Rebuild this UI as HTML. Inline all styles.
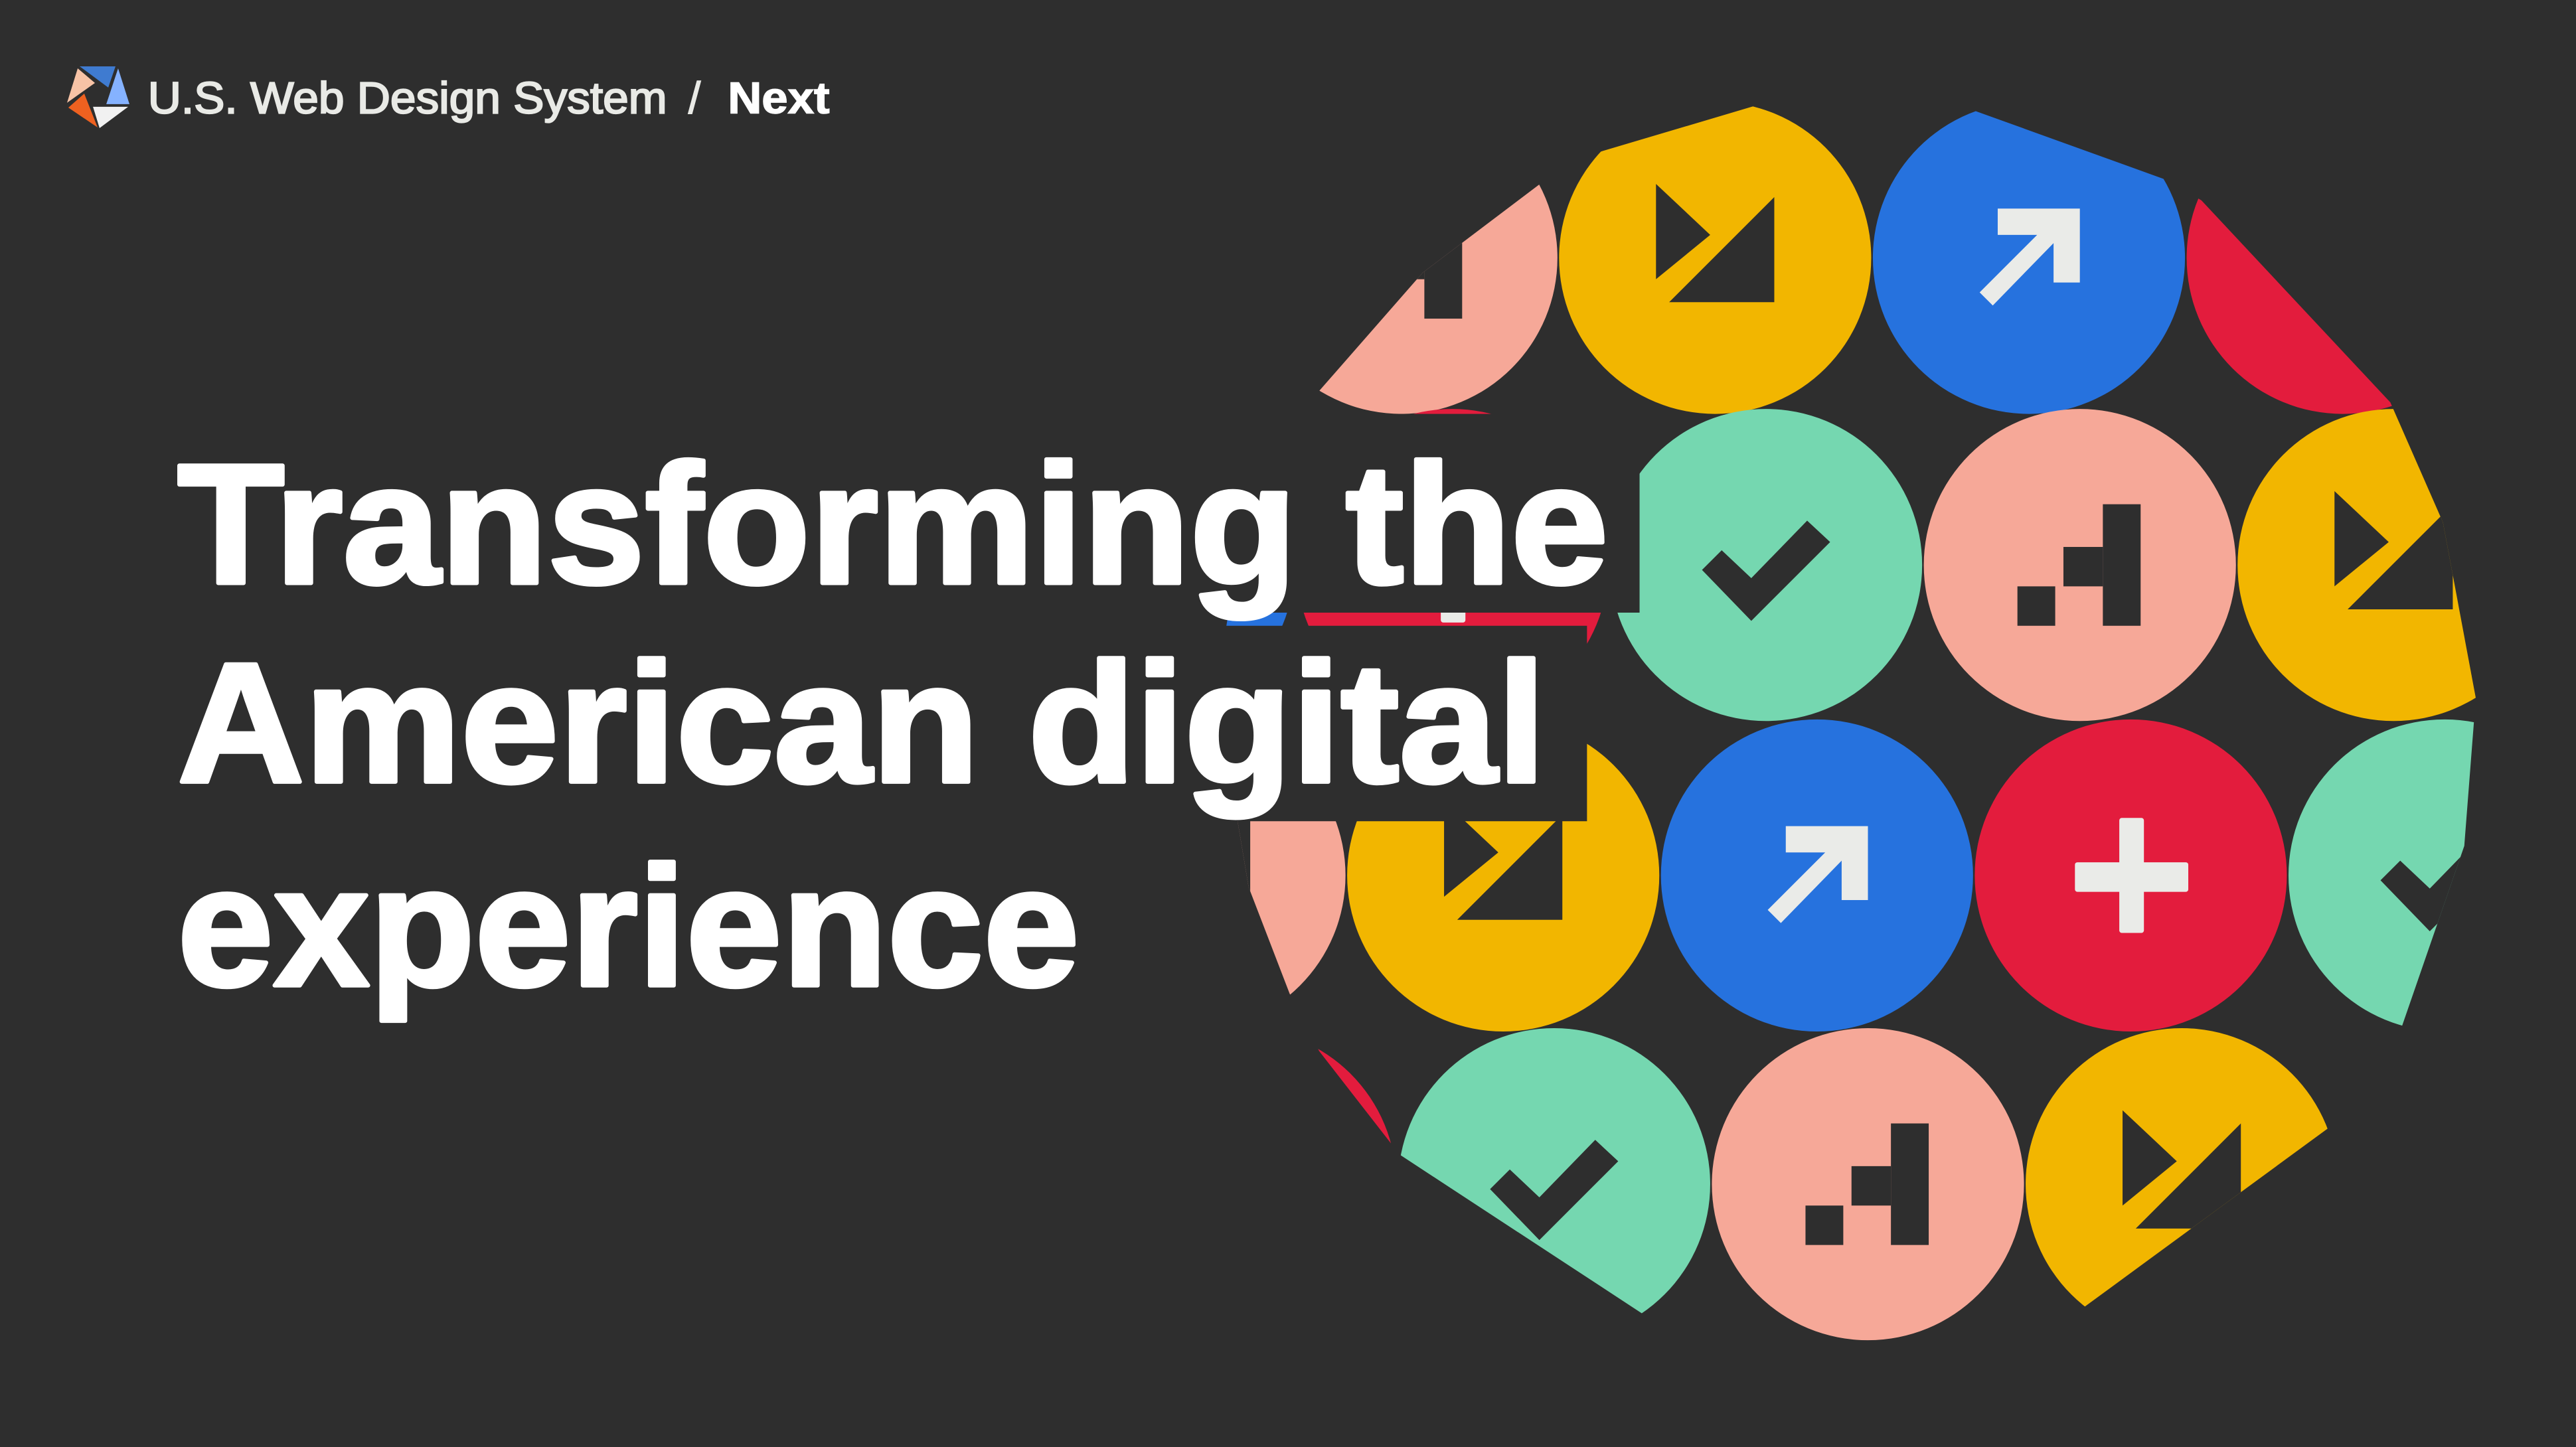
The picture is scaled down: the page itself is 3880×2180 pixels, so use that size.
<!DOCTYPE html>
<html><head><meta charset="utf-8"><style>
html,body{margin:0;padding:0;background:#2e2e2e;width:3880px;height:2180px;overflow:hidden}
svg{display:block}
</style></head><body>
<svg width="3880" height="2180" viewBox="0 0 1568 881" preserveAspectRatio="none" xmlns="http://www.w3.org/2000/svg">
<defs>
<clipPath id="big"><polygon points="803,238 866,166 940,110 972,93 1073,63 1198,66 1320,110 1340,122 1455,245 1487,318 1507,425 1500,515 1462,625 1417,687 1267,797 1137,840 1000,800 852,703 803,640 785,605 760,540 740,420 760,300"/></clipPath>
<g id="flag"><polygon points="-36,-45 -36,13 -3,-14" fill="#2e2e2e"/><polygon points="36,-37 36,27 -28,27" fill="#2e2e2e"/></g>
<g id="arrow"><polygon points="-19,-30 31,-30 31,15 15,15 15,-9 -22,29 -30,21 5,-14 -19,-14" fill="#eaebe8"/></g>
<g id="check"><polygon points="-39,3 -27,-9 -9,8 25,-27 39,-14 -9,34" fill="#2e2e2e"/></g>
<g id="steps" fill="#2e2e2e"><rect x="-38" y="13" width="23" height="24"/><rect x="-10" y="-11" width="24" height="24"/><rect x="14" y="-37" width="23" height="74"/></g>
<g id="plus" fill="#eaebe8"><rect x="-7" y="-35" width="15" height="70" rx="1.5"/><rect x="-34" y="-8" width="69" height="18" rx="1.5"/></g>
</defs>
<rect width="1568" height="881" fill="#2e2e2e"/>
<g clip-path="url(#big)">
 <circle cx="853" cy="157" r="95" fill="#f6a898"/><use href="#steps" x="853" y="157"/>
 <circle cx="1044" cy="157" r="95" fill="#f2b600"/><use href="#flag" x="1044" y="157"/>
 <circle cx="1235" cy="157" r="95" fill="#2672de"/><use href="#arrow" x="1235" y="157"/>
 <circle cx="1426" cy="157" r="95" fill="#e31c3d"/><use href="#plus" x="1426" y="157"/>
 <circle cx="693" cy="344" r="95" fill="#2672de"/><use href="#arrow" x="693" y="344"/>
 <circle cx="884" cy="344" r="95" fill="#e31c3d"/><use href="#plus" x="884" y="344"/>
 <circle cx="1075" cy="344" r="95" fill="#75d7b0"/><use href="#check" x="1075" y="344"/>
 <circle cx="1266" cy="344" r="95" fill="#f6a898"/><use href="#steps" x="1266" y="344"/>
 <circle cx="1457" cy="344" r="95" fill="#f2b600"/><use href="#flag" x="1457" y="344"/>
 <circle cx="724" cy="533" r="95" fill="#f6a898"/><use href="#steps" x="724" y="533"/>
 <circle cx="915" cy="533" r="95" fill="#f2b600"/><use href="#flag" x="915" y="533"/>
 <circle cx="1106" cy="533" r="95" fill="#2672de"/><use href="#arrow" x="1106" y="533"/>
 <circle cx="1297" cy="533" r="95" fill="#e31c3d"/><use href="#plus" x="1297" y="533"/>
 <circle cx="1488" cy="533" r="95" fill="#75d7b0"/><use href="#check" x="1488" y="533"/>
 <circle cx="755" cy="721" r="95" fill="#e31c3d"/><use href="#plus" x="755" y="721"/>
 <circle cx="946" cy="721" r="95" fill="#75d7b0"/><use href="#check" x="946" y="721"/>
 <circle cx="1137" cy="721" r="95" fill="#f6a898"/><use href="#steps" x="1137" y="721"/>
 <circle cx="1328" cy="721" r="95" fill="#f2b600"/><use href="#flag" x="1328" y="721"/>
</g>
<rect x="0" y="252" width="998" height="121" fill="#2e2e2e"/>
<rect x="0" y="381" width="966" height="119" fill="#2e2e2e"/>
<polygon points="48.5,40.4 70.3,40.4 65.9,53.3" fill="#3f7bd0"/>
<polygon points="71.9,41.6 78.8,63.4 64.7,63.4" fill="#85b2ff"/>
<polygon points="47.3,41.6 57.8,50.5 40.8,62.6" fill="#f7c3a6"/>
<polygon points="51.3,57 59.4,77.6 41.6,65.5" fill="#ee6120"/>
<polygon points="56.6,65 78,65 60.6,78" fill="#f1f1f1"/>
<g font-family="Liberation Sans, sans-serif" fill="#e9eae6">
 <text x="90" y="69" font-size="27" stroke="#e9eae6" stroke-width="0.9" textLength="316" lengthAdjust="spacingAndGlyphs">U.S. Web Design System</text>
 <text x="419" y="69" font-size="27" stroke="#e9eae6" stroke-width="0.6">/</text>
 <text x="443" y="69" font-size="27" font-weight="bold" fill="#ffffff" stroke="#ffffff" stroke-width="0.6" textLength="62" lengthAdjust="spacingAndGlyphs">Next</text>
</g>
<g font-family="Liberation Sans, sans-serif" font-weight="bold" font-size="104" fill="#ffffff" stroke="#ffffff" stroke-width="2.5" stroke-linejoin="round">
 <text x="108" y="355" textLength="871" lengthAdjust="spacingAndGlyphs">Transforming the</text>
 <text x="108" y="476" textLength="833" lengthAdjust="spacingAndGlyphs">American digital</text>
 <text x="108" y="600" textLength="549" lengthAdjust="spacingAndGlyphs">experience</text>
</g>
</svg>
</body></html>
